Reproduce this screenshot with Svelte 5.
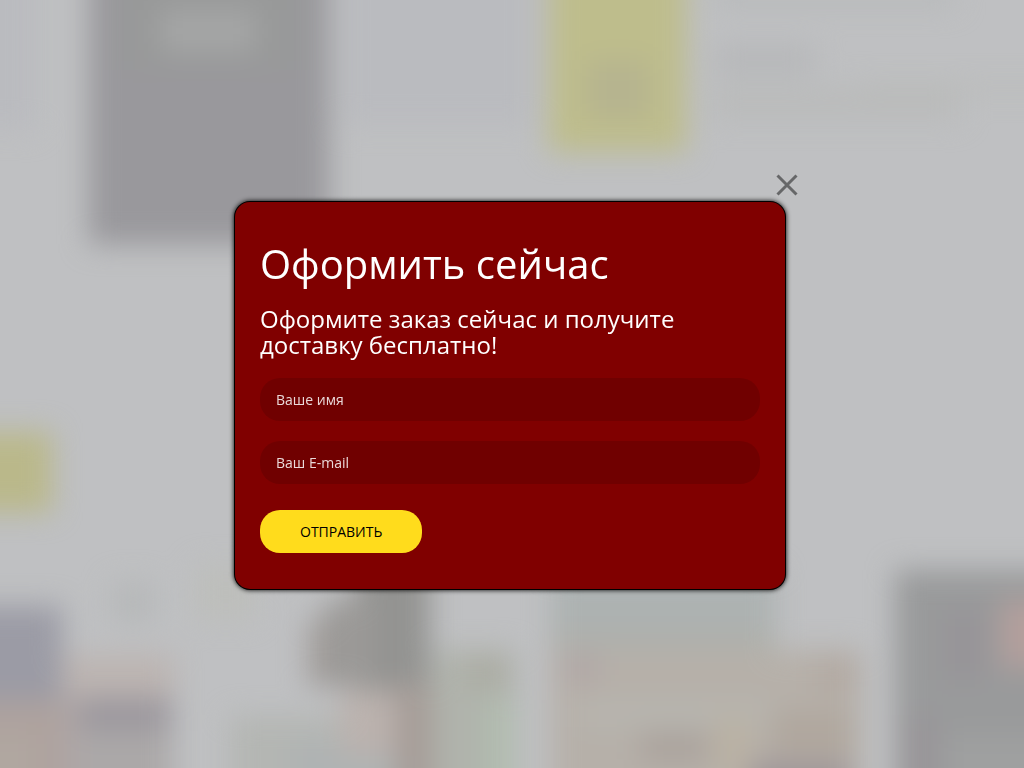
<script lang="ts">
  type Block = { x: number; y: number; w: number; h: number; fill: string };

  // page content behind the dialog
  const blocks: Block[] = [
    { x: -60, y: -60, w: 96, h: 190, fill: "#babbbf" },
    { x: 340, y: -60, w: 195, h: 185, fill: "#babbbf" },
    { x: 89, y: -60, w: 240, h: 304, fill: "#99989c" },
    { x: 120, y: -40, w: 180, h: 110, fill: "#989999" },
    { x: 160, y: 10, w: 96, h: 42, fill: "#a5a6a6" },
    { x: 549, y: -60, w: 137, h: 212, fill: "#bebd8c" },
    { x: 586, y: 60, w: 64, h: 60, fill: "#b6b48f" },
    { x: 715, y: 46, w: 100, h: 28, fill: "#b6b7b9" },
    { x: 710, y: 86, w: 250, h: 34, fill: "#babbbb" },
    { x: 860, y: 84, w: 220, h: 8, fill: "#b9bab7" },
    { x: 715, y: -14, w: 240, h: 20, fill: "#b7b9ba" },
    { x: -60, y: 432, w: 112, h: 80, fill: "#bab88a" },
    { x: 112, y: 582, w: 42, h: 40, fill: "#b6b8b9" },
    { x: 196, y: 565, w: 60, h: 55, fill: "#bdbebb" },
    { x: -60, y: 606, w: 122, h: 94, fill: "#9b9ba5" },
    { x: -60, y: 700, w: 125, h: 130, fill: "#aea29e" },
    { x: -60, y: 735, w: 95, h: 100, fill: "#b0a7a0" },
    { x: 62, y: 655, w: 112, h: 42, fill: "#bcb4b1" },
    { x: 62, y: 697, w: 18, h: 120, fill: "#aea6a6" },
    { x: 80, y: 697, w: 92, h: 34, fill: "#9c989e" },
    { x: 80, y: 731, w: 92, h: 100, fill: "#aba8a8" },
    { x: 230, y: 716, w: 110, h: 110, fill: "#b4b6b3" },
    { x: 290, y: 740, w: 110, h: 90, fill: "#afb3b3" },
    { x: 355, y: 560, w: 75, h: 130, fill: "#939391" },
    { x: 308, y: 620, w: 50, h: 66, fill: "#a29d9a" },
    { x: 325, y: 600, w: 50, h: 86, fill: "#9b9997" },
    { x: 340, y: 690, w: 60, h: 66, fill: "#bbb2ae" },
    { x: 395, y: 684, w: 38, h: 150, fill: "#a69d98" },
    { x: 433, y: 650, w: 82, h: 180, fill: "#b0b3ac" },
    { x: 465, y: 655, w: 42, h: 32, fill: "#abaca3" },
    { x: 484, y: 700, w: 32, h: 130, fill: "#b1bcaf" },
    { x: 551, y: 570, w: 225, h: 60, fill: "#adb2b2" },
    { x: 551, y: 625, w: 225, h: 25, fill: "#aeb0ac" },
    { x: 551, y: 650, w: 310, h: 185, fill: "#b6b0a9" },
    { x: 562, y: 655, w: 36, h: 28, fill: "#b1a7a6" },
    { x: 815, y: 655, w: 44, h: 40, fill: "#b3aaa3" },
    { x: 580, y: 700, w: 190, h: 28, fill: "#b7b5af" },
    { x: 640, y: 733, w: 68, h: 28, fill: "#aaa29c" },
    { x: 715, y: 716, w: 36, h: 60, fill: "#bab2a4" },
    { x: 772, y: 712, w: 80, h: 45, fill: "#b0a79e" },
    { x: 750, y: 762, w: 100, h: 60, fill: "#9e9698" },
    { x: 895, y: 570, w: 200, h: 260, fill: "#999a9b" },
    { x: 945, y: 610, w: 40, h: 70, fill: "#979498" },
    { x: 1000, y: 600, w: 80, h: 68, fill: "#b39f9c" },
    { x: 908, y: 715, w: 26, h: 110, fill: "#989498" },
    { x: 945, y: 735, w: 100, h: 90, fill: "#9fa0a0" },
  ];

  let open = $state(true);
  let name = $state("");
  let email = $state("");

  function close() {
    open = false;
  }

  function submit(event: SubmitEvent) {
    event.preventDefault();
    close();
  }
</script>

<div class="page">
  <svg class="backdrop" viewBox="0 0 1024 768" preserveAspectRatio="xMidYMid slice" aria-hidden="true">
    <defs>
      <filter id="soften" x="-10%" y="-10%" width="120%" height="120%" color-interpolation-filters="sRGB">
        <feGaussianBlur stdDeviation="14" />
      </filter>
    </defs>
    <g filter="url(#soften)">
      {#each blocks as block}
        <rect x={block.x} y={block.y} width={block.w} height={block.h} fill={block.fill} />
      {/each}
    </g>
  </svg>

  {#if open}
    <div class="overlay">
      <div class="dialog" role="dialog" aria-modal="true" aria-labelledby="order-title">
        <button class="close" type="button" aria-label="Закрыть" onclick={close}>
          <svg viewBox="0 0 22 22" width="22" height="22" aria-hidden="true">
            <path d="M1.5 1.5 L20.5 20.5 M20.5 1.5 L1.5 20.5" />
          </svg>
        </button>

        <form onsubmit={submit}>
          <h2 id="order-title">Оформить сейчас</h2>
          <p>Оформите заказ сейчас и получите доставку бесплатно!</p>
          <input type="text" placeholder="Ваше имя" aria-label="Ваше имя" bind:value={name} />
          <input type="email" placeholder="Ваш E-mail" aria-label="Ваш E-mail" bind:value={email} />
          <button class="submit" type="submit">Отправить</button>
        </form>
      </div>
    </div>
  {/if}
</div>

<style>
  :global(body) {
    margin: 0;
  }

  .page {
    min-height: 100vh;
    background: #bfc0c2;
    font-family: "Open Sans", "Noto Sans", sans-serif;
  }

  .backdrop {
    position: fixed;
    inset: 0;
    width: 100%;
    height: 100%;
  }

  .overlay {
    position: fixed;
    inset: 0;
    display: flex;
    align-items: center;
    justify-content: center;
    box-sizing: border-box;
    padding: 23px 4px 0 0;
    overflow: auto;
  }

  .dialog {
    position: relative;
    box-sizing: border-box;
    width: 100%;
    max-width: 550px;
    padding: 36px 25px;
    border-radius: 15px;
    background: #800000;
    box-shadow: 0 0 0 1px #000, 0 0 5px 1px #000;
    color: #fff;
  }

  .close {
    position: absolute;
    top: -39px;
    right: -24px;
    display: flex;
    align-items: center;
    justify-content: center;
    width: 44px;
    height: 44px;
    padding: 0;
    border: 0;
    background: none;
    cursor: pointer;
  }

  .close path {
    fill: none;
    stroke: #666768;
    stroke-width: 3;
  }

  form {
    display: flex;
    flex-direction: column;
    align-items: flex-start;
  }

  h2 {
    margin: 0 0 16px;
    font-size: 40px;
    font-weight: 400;
    line-height: 52px;
  }

  p {
    margin: 0 0 20px;
    font-size: 24px;
    line-height: 26px;
  }

  input {
    box-sizing: border-box;
    width: 100%;
    height: 43px;
    margin: 0 0 20px;
    padding: 0 16px;
    border: 0;
    border-radius: 20px;
    background: #700000;
    color: #fff;
    font: inherit;
    font-size: 14px;
  }

  input::placeholder {
    color: #fff;
    opacity: 0.85;
  }

  .submit {
    height: 43px;
    margin-top: 6px;
    padding: 0 40px;
    border: 0;
    border-radius: 20px;
    background: #ffdc1c;
    color: #000;
    font: inherit;
    font-size: 14px;
    text-transform: uppercase;
    cursor: pointer;
  }
</style>
